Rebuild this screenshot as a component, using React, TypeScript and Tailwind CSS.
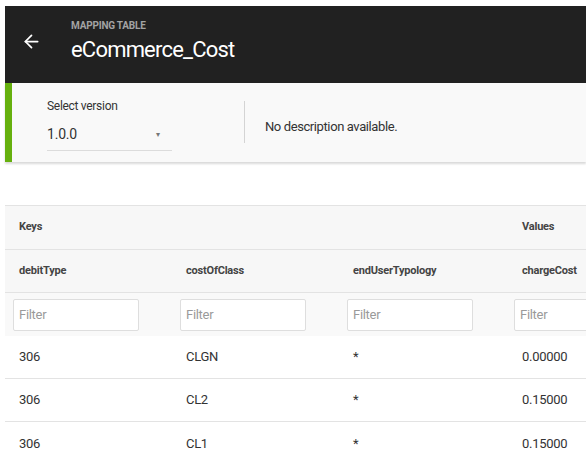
import { ArrowLeft } from "lucide-react";

const rows = [
  { debitType: "306", costOfClass: "CLGN", endUserTypology: "*", chargeCost: "0.00000" },
  { debitType: "306", costOfClass: "CL2", endUserTypology: "*", chargeCost: "0.15000" },
  { debitType: "306", costOfClass: "CL1", endUserTypology: "*", chargeCost: "0.15000" },
];

const columns = ["debitType", "costOfClass", "endUserTypology", "chargeCost"] as const;

const font = { fontFamily: "Roboto, sans-serif" };

export default function App() {
  return (
    <div className="w-[586px] h-[457px] overflow-hidden bg-white pt-[6px] pl-[5px]" style={font}>
      {/* title bar */}
      <div className="h-[77px] bg-[#212121] flex items-center pl-[16px]">
        <ArrowLeft className="w-[21px] h-[21px] text-white mt-[-6px]" strokeWidth={2} />
        <div className="ml-[29px] flex flex-col mt-[-6px]">
          <span className="text-[10px] font-bold text-[#a3a3a3] leading-[14px] tracking-[-0.2px]">MAPPING TABLE</span>
          <span className="text-[22px] text-white leading-[30px] mt-[2px] tracking-[-0.8px]">eCommerce_Cost</span>
        </div>
      </div>

      {/* version panel */}
      <div className="h-[79px] bg-[#f9f9f9] border-l-[7px] border-[#66b00e] shadow-[0_2px_2px_rgba(0,0,0,0.15)] flex items-center">
        <div className="ml-[35px] w-[125px] flex flex-col mt-[3px]">
          <span className="text-[12px] text-[#333] leading-[16px] tracking-[-0.3px]">Select version</span>
          <div className="flex items-center justify-between border-b border-[#dcdcdc] h-[30px] mt-[7px]">
            <span className="text-[14px] text-[#333] tracking-[-0.2px] mt-[-2px]">1.0.0</span>
            <span className="text-[8px] text-[#777] mr-[12px]">▾</span>
          </div>
        </div>
        <div className="ml-[72px] w-px h-[42px] bg-[#d4d4d4] mt-[-2px]" />
        <span className="ml-[20px] text-[13px] text-[#333] tracking-[-0.4px] mt-[8px]">No description available.</span>
      </div>

      {/* table */}
      <div className="mt-[43px] w-[668px] border-t border-[#e3e3e3]">
        <div className="grid grid-cols-[167px_167px_167px_167px] h-[44px] bg-[#f7f7f7] border-b border-[#e3e3e3] items-center text-[11px] font-bold text-[#444] tracking-[-0.2px]">
          <span className="pl-[14px]">Keys</span>
          <span />
          <span />
          <span className="pl-[16px]">Values</span>
        </div>
        <div className="grid grid-cols-[167px_167px_167px_167px] h-[43px] bg-[#f7f7f7] border-b border-[#e3e3e3] items-center text-[11px] font-bold text-[#444] tracking-[-0.2px]">
          {columns.map((c, i) => (
            <span key={c} className={i === 3 ? "pl-[16px]" : "pl-[14px]"}>{c}</span>
          ))}
        </div>
        <div className="grid grid-cols-[167px_167px_167px_167px] h-[43px] bg-[#f9f9f9] items-center">
          {columns.map((c) => (
            <div key={c} className="pl-[8px]">
              <input
                placeholder="Filter"
                className="w-[126px] h-[32px] bg-white border border-[#dedede] rounded-[2px] px-[5px] text-[13px] tracking-[-0.3px] placeholder:text-[#9a9a9a] outline-none"
                style={font}
              />
            </div>
          ))}
        </div>
        {rows.map((r, i) => (
          <div
            key={i}
            className={`grid grid-cols-[167px_167px_167px_167px] h-[43px] items-center text-[13px] text-[#333] tracking-[-0.3px] ${i < rows.length - 1 ? "border-b border-[#e3e3e3]" : ""}`}
          >
            {columns.map((c, j) => (
              <span key={c} className={j === 3 ? "pl-[16px]" : "pl-[14px]"}>{r[c]}</span>
            ))}
          </div>
        ))}
      </div>
    </div>
  );
}
